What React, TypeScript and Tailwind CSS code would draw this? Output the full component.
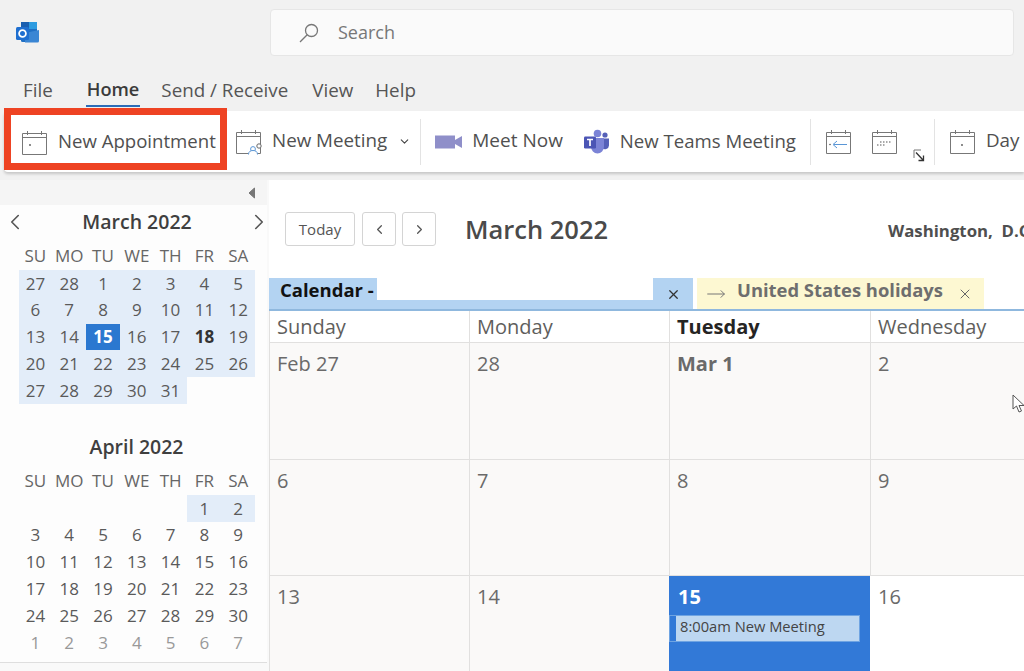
import { ChevronDown, ChevronLeft, ChevronRight, X, MoveRight } from "lucide-react";

const font = "font-['Open_Sans',sans-serif]";

const CalIcon = ({ children, className = "" }: { children?: React.ReactNode; className?: string }) => (
  <svg width="27" height="27" viewBox="0 0 27 27" fill="none" className={className}>
    <path d="M1.5 4.5h24v21h-24z M1.5 8.5h24 M6.5 2v4 M20.5 2v4" stroke="#777" strokeWidth="1" />
    {children}
  </svg>
);

const Sep = ({ className = "" }: { className?: string }) => <div className={`h-[46px] w-px bg-[#e3e3e3] ${className}`} />;

const RibbonText = ({ children, className = "" }: { children: React.ReactNode; className?: string }) => (
  <span className={`-mt-[2px] ${className}`}>{children}</span>
);

const OutlookLogo = () => (
  <svg width="25" height="25" viewBox="0 0 25 25">
    <rect x="6" y="2" width="16" height="20" rx="1.5" fill="#1f6fc4" />
    <rect x="13" y="2" width="9" height="7" fill="#2d9be0" />
    <rect x="6" y="2" width="8" height="7" fill="#1a5fb0" />
    <path d="M10 13l14-3v11a1.5 1.5 0 0 1-1.5 1.5H10z" fill="#3a86d4" />
    <rect x="1" y="7" width="13" height="13" rx="1.5" fill="#1f6fd0" />
    <circle cx="7.5" cy="13.5" r="3.4" fill="none" stroke="#fff" strokeWidth="1.8" />
  </svg>
);

const TeamsLogo = () => (
  <svg width="27" height="25" viewBox="0 0 27 25">
    <circle cx="14.5" cy="4.5" r="3.8" fill="#7b83d6" />
    <circle cx="22" cy="6" r="2.6" fill="#5560b8" />
    <path d="M19 9.5h7v7a4 4 0 0 1-7 2.4z" fill="#5560b8" />
    <path d="M8 9h13v9a6.5 6.5 0 0 1-13 0z" fill="#7b83d6" />
    <rect x="1" y="7.5" width="12" height="12" rx="1.2" fill="#4b55b5" />
    <path d="M4 10.5h6M7 10.5v6.5" stroke="#fff" strokeWidth="1.7" />
  </svg>
);

const march = [
  [27, 28, 1, 2, 3, 4, 5],
  [6, 7, 8, 9, 10, 11, 12],
  [13, 14, 15, 16, 17, 18, 19],
  [20, 21, 22, 23, 24, 25, 26],
  [27, 28, 29, 30, 31],
];
const april = [
  [0, 0, 0, 0, 0, 1, 2],
  [3, 4, 5, 6, 7, 8, 9],
  [10, 11, 12, 13, 14, 15, 16],
  [17, 18, 19, 20, 21, 22, 23],
  [24, 25, 26, 27, 28, 29, 30],
  [1, 2, 3, 4, 5, 6, 7],
];
const weekdays = ["SU", "MO", "TU", "WE", "TH", "FR", "SA"];

const Weekdays = () => (
  <div className="grid grid-cols-[repeat(7,33.8px)] h-[26px] items-center text-[17px] text-[#666]">
    {weekdays.map((d) => (
      <div key={d} className="text-center">{d}</div>
    ))}
  </div>
);

const MiniMonth = ({ rows, kind }: { rows: number[][]; kind: "march" | "april" }) => (
  <div className="grid grid-cols-[repeat(7,33.8px)] auto-rows-[26.8px] text-[17px] text-[#5a5a5a]">
    {rows.flatMap((row, r) =>
      row.map((d, c) => {
        const selected = kind === "march" && r === 2 && c === 2;
        const tinted = kind === "march" || (r === 0 && c >= 5);
        const today = kind === "march" && r === 2 && c === 5;
        const muted = kind === "april" && r === 5;
        return (
          <div
            key={`${r}-${c}`}
            className={
              "flex items-center justify-center " +
              (selected
                ? "bg-[#2b78d0] text-white font-bold"
                : tinted
                  ? "bg-[#e3edf9]"
                  : "") +
              (today ? " font-bold text-[#333]" : "") +
              (muted ? " text-[#999]" : "")
            }
          >
            {d > 0 ? d : ""}
          </div>
        );
      }),
    )}
  </div>
);

const Cell = ({
  label,
  bold,
  className = "",
}: {
  label: string;
  bold?: boolean;
  className?: string;
}) => (
  <div
    className={`pl-[7px] pt-[7px] text-[20px] leading-[28px] text-[#6a6a6a] bg-[#faf9f8] border-l border-b border-[#e1e0df] ${
      bold ? "font-bold" : ""
    } ${className}`}
  >
    {label}
  </div>
);

const Head = ({ label, bold }: { label: string; bold?: boolean }) => (
  <div
    className={`pl-[7px] flex items-center text-[20px] border-l border-b border-[#e1e0df] ${
      bold ? "font-bold text-[#252423]" : "text-[#605e5c]"
    }`}
  >
    {label}
  </div>
);

export default function App() {
  return (
    <div className={`${font} w-[1024px] h-[671px] overflow-hidden bg-[#f1f1f1] flex flex-col`}>
      <div className="h-[65px] flex shrink-0">
        <div className="w-[270px] pl-[15px] pt-[20px]">
          <OutlookLogo />
        </div>
        <div className="mt-[9px] h-[47px] w-[744px] bg-[#fafafa] border border-[#e6e6e6] rounded-[4px] flex items-center pl-[27px]">
          <svg width="22" height="22" viewBox="0 0 22 22" fill="none" stroke="#777" strokeWidth="1.3">
            <circle cx="13.5" cy="8.5" r="6" />
            <path d="M9.2 12.8L2 20" />
          </svg>
          <span className="ml-[18px] text-[18px] text-[#777]">Search</span>
        </div>
      </div>

      <div className="h-[46px] flex shrink-0 text-[18.8px] text-[#555]">
        <span className="ml-[23px] mt-[11px]">File</span>
        <div className="ml-[34px] mt-[11px] relative h-[34px] text-[18.2px] font-semibold text-[#3b3b3b]">
          Home
          <div className="absolute -left-px -right-px top-[29px] h-[2px] bg-[#2b6cb8]" />
        </div>
        <span className="ml-[22px] mt-[11px]">Send / Receive</span>
        <span className="ml-[24px] mt-[11px]">View</span>
        <span className="ml-[22px] mt-[11px]">Help</span>
      </div>

      <div className="h-[61px] ml-[4px] shrink-0 bg-white rounded-l-[4px] shadow-[0_2px_3px_rgba(0,0,0,0.18)] flex items-center text-[18.8px] text-[#505050] whitespace-nowrap">
        <div className="w-[223px] h-[62px] -mt-[5px] border-[7px] border-[#ee4323] bg-white flex items-center pl-[10px] pt-[6px] shrink-0">
          <CalIcon>
            <circle cx="9" cy="16" r="0.9" fill="#555" />
          </CalIcon>
          <RibbonText className="ml-[10px] text-[18.6px]">New Appointment</RibbonText>
        </div>
        <CalIcon className="ml-[8px] shrink-0">
          <circle cx="18" cy="21" r="2.4" fill="#fff" stroke="#5a96d6" />
          <path d="M13.5 26.5c0-3 2-4 4.5-4s4.5 1 4.5 4" fill="#fff" stroke="#5a96d6" />
          <circle cx="24" cy="18" r="2.2" fill="#fff" stroke="#666" />
        </CalIcon>
        <RibbonText className="ml-[10px]">New Meeting</RibbonText>
        <ChevronDown size={13} strokeWidth={2} className="ml-[11px] text-[#444]" />
        <Sep className="ml-[9px]" />
        <svg width="28" height="14" viewBox="0 0 28 14" className="ml-[14px]">
          <rect x="0" y="0.5" width="20" height="13" fill="#8f8fc9" />
          <path d="M20 5l7-4v12l-7-4z" fill="#8f8fc9" />
        </svg>
        <RibbonText className="ml-[9px] text-[19px]">Meet Now</RibbonText>
        <span className="ml-[20px]"><TeamsLogo /></span>
        <RibbonText className="ml-[10px] text-[18.6px]">New Teams Meeting</RibbonText>
        <Sep className="ml-[14px]" />
        <CalIcon className="ml-[14px]">
          <path d="M9 16.5h13M12 13l-4 3.5 4 3.5" stroke="#5a96d6" />
          <circle cx="5" cy="16.5" r="0.8" fill="#555" />
        </CalIcon>
        <CalIcon className="ml-[19px]">
          <path d="M6 17h1.5M9 17h1.5M12 17h1.5M9 14h1.5M12 14h1.5M15 14h1.5M18 14h1.5" stroke="#555" strokeWidth="1.2" />
        </CalIcon>
        <svg width="12" height="13" viewBox="0 0 12 13" fill="none" className="ml-[15px] mt-[28px]">
          <path d="M8 1H1v8" stroke="#777" />
          <path d="M3 3.5l7.5 8M10.5 6.5v5h-5" stroke="#333" strokeWidth="1.3" />
        </svg>
        <Sep className="ml-[9px]" />
        <CalIcon className="ml-[14px]">
          <circle cx="13" cy="17" r="0.9" fill="#555" />
        </CalIcon>
        <RibbonText className="ml-[10px]">Day</RibbonText>
      </div>

      <div className="h-[8px] shrink-0" />

      <div className="flex flex-1 min-h-0 bg-white">
        <aside className="w-[269px] shrink-0 bg-[#f9f9f9] flex flex-col pr-[2px]">
          <div className="h-[25px] flex justify-end items-center pr-[11px] bg-[#f5f5f5]">
            <svg width="9" height="12" viewBox="0 0 9 12">
              <path d="M7.5 1L2 6l5.5 5z" fill="#777" stroke="#777" />
            </svg>
          </div>
          <div className="bg-[#fdfdfd] h-[458px] border-b border-[#dedede]">
            <div className="flex items-center h-[34px] pl-[2px]">
              <ChevronLeft size={26} strokeWidth={1.5} className="text-[#555] shrink-0" />
              <div className="w-[218px] shrink-0 text-center text-[19.5px] font-semibold text-[#3f3f3f]">March 2022</div>
              <ChevronRight size={26} strokeWidth={1.5} className="text-[#555] shrink-0" />
            </div>
            <div className="pl-[18.5px]">
              <div className="mt-[4px]">
                <Weekdays />
              </div>
              <div className="mt-[1px]">
                <MiniMonth rows={march} kind="march" />
              </div>
              <div className="mt-[28px] w-[236px] text-center text-[19.5px] font-semibold text-[#3f3f3f] h-[30px] flex items-center justify-center">
                April 2022
              </div>
              <div className="mt-[6px]">
                <Weekdays />
              </div>
              <div className="mt-[1px]">
                <MiniMonth rows={april} kind="april" />
              </div>
            </div>
          </div>
        </aside>

        <main className="flex-1 min-w-0 flex flex-col">
          <div className="h-[98px] shrink-0 flex pl-[16px] pt-[32px] whitespace-nowrap overflow-hidden">
            <button type="button" className="h-[34px] w-[70px] shrink-0 border border-[#d4d4d4] rounded-[3px] text-[15px] text-[#555]">
              Today
            </button>
            <button type="button" className="h-[34px] w-[34px] shrink-0 ml-[7px] border border-[#d4d4d4] rounded-[3px] flex items-center justify-center">
              <ChevronLeft size={15} className="text-[#555]" />
            </button>
            <button type="button" className="h-[34px] w-[34px] shrink-0 ml-[6px] border border-[#d4d4d4] rounded-[3px] flex items-center justify-center">
              <ChevronRight size={15} className="text-[#555]" />
            </button>
            <div className="ml-[29px] h-[34px] w-[423px] shrink-0 flex items-center text-[25.5px] font-semibold text-[#4a4a4a]">March 2022</div>
            <div className="h-[38px] shrink-0 flex items-center text-[16.8px] font-bold text-[#4f4f4f]">
              Washington,&nbsp; D.C.
            </div>
          </div>

          <div className="h-[33px] shrink-0 flex border-b-2 border-[#8fb8de]">
            <div className="w-[424px] bg-[#b3d3f2] flex">
              <div className="w-[108px] h-[24px] pl-[11px] flex items-center text-[18.5px] font-bold text-[#111] whitespace-nowrap">Calendar -</div>
              <div className="w-[276px] h-[22px] bg-white" />
              <div className="flex-1 flex items-center justify-center pt-[1px]">
                <X size={15} className="text-[#333]" />
              </div>
            </div>
            <div className="w-[287px] ml-[4px] bg-[#fdf8d2] flex items-center pl-[9px] text-[18.4px] font-bold text-[#6e6e6e] whitespace-nowrap">
              <MoveRight size={20} strokeWidth={1.2} className="text-[#777]" />
              <span className="ml-[11px] -mt-[7px]">United States holidays</span>
              <X size={16} strokeWidth={1.5} className="ml-[14px] text-[#666]" />
            </div>
          </div>

          <div className="flex-1 min-h-0 grid grid-cols-[200px_200px_201px_1fr] grid-rows-[32px_117px_116px_1fr]">
            <Head label="Sunday" />
            <Head label="Monday" />
            <Head label="Tuesday" bold />
            <Head label="Wednesday" />

            <Cell label="Feb 27" />
            <Cell label="28" />
            <Cell label="Mar 1" bold />
            <Cell label="2" />

            <Cell label="6" />
            <Cell label="7" />
            <Cell label="8" />
            <Cell label="9" />

            <Cell label="13" className="border-b-0" />
            <Cell label="14" className="border-b-0" />
            <div className="bg-[#3279d7] pt-[7px] flex flex-col">
              <div className="pl-[9px] text-[20px] leading-[28px] font-bold text-white">15</div>
              <div className="mt-[5px] ml-px w-[189px] h-[25px] flex bg-[#bdd7f1] text-[14.7px] text-[#444] items-center border-l-[6px] border-[#3279d7] outline outline-1 outline-[#6fa4e2] pl-[4px] pb-[4px] whitespace-nowrap">
                8:00am New Meeting
              </div>
            </div>
            <div className="bg-white pl-[8px] pt-[7px] text-[20px] leading-[28px] text-[#6a6a6a]">16</div>
          </div>
        </main>
      </div>

      <svg width="13" height="19" viewBox="0 0 13 19" className="absolute left-[1012px] top-[394px]" fill="#fff" stroke="#555" strokeWidth="1">
        <path d="M1 1v14l3.5-3 2.5 6 2.5-1-2.5-5.5h5z" />
      </svg>
    </div>
  );
}
